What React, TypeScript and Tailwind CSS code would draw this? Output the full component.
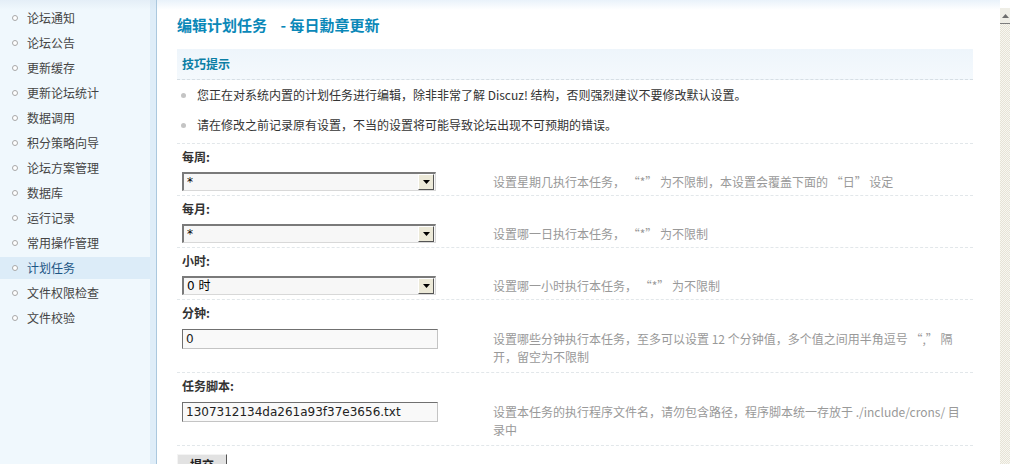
import React from "react";

const menu = [
  "论坛通知",
  "论坛公告",
  "更新缓存",
  "更新论坛统计",
  "数据调用",
  "积分策略向导",
  "论坛方案管理",
  "数据库",
  "运行记录",
  "常用操作管理",
  "计划任务",
  "文件权限检查",
  "文件校验",
];

function Select({ value }: { value: string }) {
  return (
    <div className="w-[254px] h-[19px] flex bg-[#f7f7f7] border-t-2 border-l-2 border-t-[#7a7a7a] border-l-[#7a7a7a] border-b border-r border-b-[#d8d8d8] border-r-[#d8d8d8]">
      <div className="flex-1 pl-[3px] leading-[16px] text-[12px] text-black font-['DejaVu_Sans','Noto_Sans_CJK_SC',sans-serif]">
        {value}
      </div>
      <div className="w-[16px] h-[16px] mr-[1px] bg-[#ece9d8] border border-t-white border-l-white border-b-[#555] border-r-[#555] flex items-center justify-center">
        <svg width="7" height="4" viewBox="0 0 7 4">
          <polygon points="0,0 7,0 3.5,4" fill="#000" />
        </svg>
      </div>
    </div>
  );
}

function TextInput({ value }: { value: string }) {
  return (
    <div className="w-[256px] h-[20px] bg-[#f9f9f9] border border-t-[#707070] border-l-[#707070] border-b-[#c4c4c4] border-r-[#c4c4c4] pl-[3px] leading-[18px] text-[12px] text-[#222] font-['DejaVu_Sans','Noto_Sans_CJK_SC',sans-serif]">
      {value}
    </div>
  );
}

function SelectGroup({ label, value, desc }: { label: string; value: string; desc: string }) {
  return (
    <div className="border-b border-dashed border-[#e2e7ea]">
      <div className="h-[25px] flex items-center pl-[5px] font-bold text-[#333]">{label}</div>
      <div className="h-[26px] flex">
        <div className="w-[311px] shrink-0 pl-[5px] pt-[3px]">
          <Select value={value} />
        </div>
        <div className="min-w-0 pl-[5px] pt-[4px] leading-[18px] text-[#999] whitespace-nowrap">{desc}</div>
      </div>
    </div>
  );
}

function InputGroup({ label, value, lines }: { label: string; value: string; lines: string[] }) {
  return (
    <div className="border-b border-dashed border-[#e2e7ea]">
      <div className="h-[25px] flex items-center pl-[5px] font-bold text-[#333]">{label}</div>
      <div className="h-[47px] flex">
        <div className="w-[311px] shrink-0 pl-[5px] pt-[4px]">
          <TextInput value={value} />
        </div>
        <div className="min-w-0 pl-[5px] pt-[5px] leading-[18px] text-[#999]">
          {lines.map((l) => (
            <div key={l} className="whitespace-nowrap">
              {l}
            </div>
          ))}
        </div>
      </div>
    </div>
  );
}

export default function App() {
  return (
    <div className="w-[1010px] h-[464px] overflow-hidden flex text-[12px] font-['Noto_Sans_CJK_SC',sans-serif] bg-white">
      {/* Sidebar */}
      <div className="flex h-full shrink-0">
        <div className="w-[150px] h-full bg-[linear-gradient(#e4eef7,#f0f8fd_10px)] pt-[7px] flex flex-col gap-[3px]">
          {menu.map((m) => {
            const active = m === "计划任务";
            return (
              <div
                key={m}
                className={
                  active
                    ? "h-[22px] flex items-center bg-[#dcecf8] text-[#1d5685]"
                    : "h-[22px] flex items-center text-[#444]"
                }
              >
                <span className="ml-[12px] w-[6px] h-[6px] rounded-full border border-[#a8a8a8] bg-white" />
                <span className="ml-[9px]">{m}</span>
              </div>
            );
          })}
        </div>
        <div className="w-[6px] h-full bg-[linear-gradient(#d8e7f3,#dfedf8_10px)]" />
        <div className="w-[1px] h-full bg-[#abc8de]" />
      </div>

      {/* Main */}
      <div className="w-[843px] shrink-0 h-full overflow-hidden bg-[linear-gradient(#e9f2fa,#ffffff_10px)] pt-[15px] pl-[20px] pr-[27px]">
        <div className="h-[20px] leading-[20px] text-[15px] font-bold text-[#0a88b8] whitespace-nowrap">
          编辑计划任务&nbsp;&nbsp;&nbsp;&nbsp;- 每日勳章更新
        </div>
        <div className="mt-[14px] h-[31px] bg-[linear-gradient(#eef5fb,#f4f9fd)] border-b border-dashed border-[#d6dee4] flex items-center pl-[5px] font-bold text-[#0b7ea5]">
          技巧提示
        </div>
        <div className="pb-[3px] border-b border-dashed border-[#e2e7ea]">
          {[
            "您正在对系统内置的计划任务进行编辑，除非非常了解 Discuz! 结构，否则强烈建议不要修改默认设置。",
            "请在修改之前记录原有设置，不当的设置将可能导致论坛出现不可预期的错误。",
          ].map((t) => (
            <div key={t} className="h-[30px] flex items-center text-[#333]">
              <span className="ml-[4px] w-[5px] h-[5px] rounded-full bg-[#c4c4c4]" />
              <span className="ml-[11px] whitespace-nowrap">{t}</span>
            </div>
          ))}
        </div>

        <SelectGroup label="每周:" value="*" desc="设置星期几执行本任务， “*” 为不限制，本设置会覆盖下面的 “日” 设定" />
        <SelectGroup label="每月:" value="*" desc="设置哪一日执行本任务， “*” 为不限制" />
        <SelectGroup label="小时:" value="0 时" desc="设置哪一小时执行本任务， “*” 为不限制" />
        <InputGroup
          label="分钟:"
          value="0"
          lines={["设置哪些分钟执行本任务，至多可以设置  12 个分钟值，多个值之间用半角逗号 “,” 隔", "开，留空为不限制"]}
        />
        <InputGroup
          label="任务脚本:"
          value="1307312134da261a93f37e3656.txt"
          lines={["设置本任务的执行程序文件名，请勿包含路径，程序脚本统一存放于  ./include/crons/ 目", "录中"]}
        />

        <div className="mt-[8px]">
          <button className="w-[50px] h-[22px] bg-[#e2e2e2] border border-t-[#f4f4f4] border-l-[#f4f4f4] border-b-[#555] border-r-[#555] text-[12px] font-bold text-[#222] leading-[20px]">
            提交
          </button>
        </div>
      </div>

      {/* Scrollbar */}
      <div className="w-[10px] shrink-0 h-full flex flex-col pt-[8px]">
        <div className="h-[16px] bg-[#efeee6] border-b border-[#7d7d7d] flex items-center justify-center">
          <svg width="7" height="4" viewBox="0 0 7 4">
            <polygon points="3.5,0 7,4 0,4" fill="#6d6d6d" />
          </svg>
        </div>
        <div className="flex-1 bg-[repeating-conic-gradient(#e6e3d6_0%_25%,#f8f7f1_0%_50%)] bg-[length:2px_2px]" />
      </div>
    </div>
  );
}
